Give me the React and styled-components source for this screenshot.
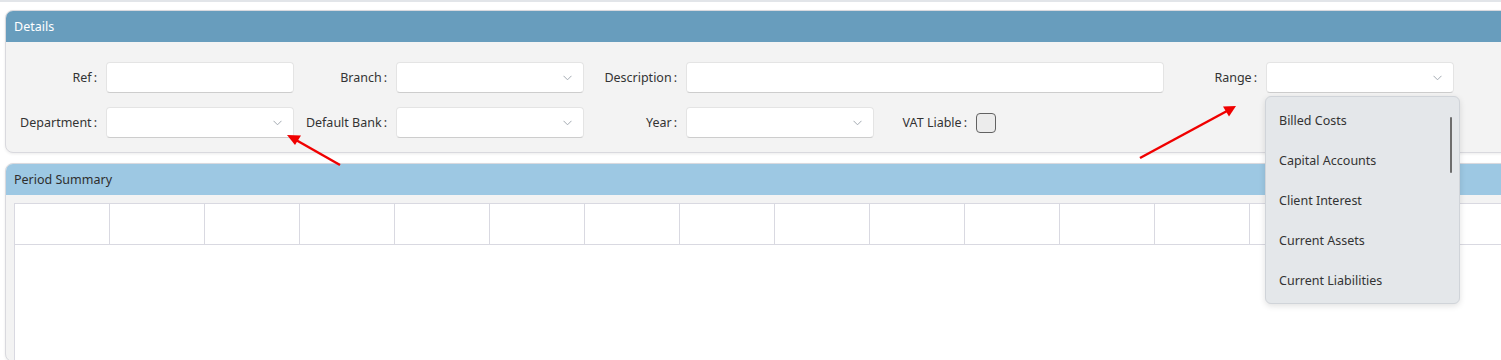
import React from "react";
import styled, { createGlobalStyle } from "styled-components";

const GlobalStyle = createGlobalStyle`
  html, body { margin: 0; padding: 0; background: #ffffff; overflow: hidden; }
  body { font-family: "Noto Sans", "Open Sans", sans-serif; color: #333; }
  * { box-sizing: border-box; }
`;

const TopLine = styled.div`
  height: 2px;
  background: #e2e5e9;
`;

const Page = styled.div`
  position: relative;
  padding: 8px 0 0 5px;
  display: flex;
  flex-direction: column;
  gap: 10px;
  width: calc(100% + 30px);
`;

const Panel = styled.section`
  background: #f3f3f3;
  border: 1px solid #d9d9de;
  border-radius: 8px;
  box-shadow: 0 1px 3px rgba(0, 0, 0, 0.08);
`;

const PanelHeader = styled.div`
  height: 31px;
  display: flex;
  align-items: center;
  padding-left: 8px;
  font-size: 12.5px;
  color: ${(p) => (p.$light ? "#2e2e2e" : "#ffffff")};
  background: ${(p) => (p.$light ? "#9dc8e3" : "#689dbd")};
  border-radius: 7px 7px 0 0;
`;

const Form = styled.div`
  display: grid;
  grid-template-columns: 100px 188px 102px 188px 102px 188px 102px 188px 102px 188px;
  grid-auto-rows: 31px;
  row-gap: 14px;
  padding: 20px 0 14px 0;
`;

const Label = styled.label`
  display: flex;
  align-items: center;
  justify-content: flex-end;
  padding-right: 9px;
  font-size: 12.5px;
  color: #333;
  white-space: nowrap;
`;

const Colon = styled.span`
  margin-left: 2px;
`;

const TextBox = styled.div`
  grid-column: ${(p) => p.$span || "auto"};
  background: #ffffff;
  border: 1px solid #e4e4e4;
  border-bottom-color: #cdcdcd;
  border-radius: 4px;
  position: relative;
  display: flex;
  align-items: center;
  justify-content: flex-end;
  padding-right: 11px;
`;

const CheckCell = styled.div`
  display: flex;
  align-items: center;
`;

const CheckBox = styled.div`
  width: 20px;
  height: 20px;
  border: 1.5px solid #626262;
  border-radius: 4px;
  background: #ececec;
`;

const Dropdown = styled.div`
  position: absolute;
  top: calc(100% + 4px);
  left: -2px;
  width: 195px;
  height: 208px;
  background: #e4e7ea;
  border: 1px solid #d0d4d9;
  border-radius: 6px;
  box-shadow: 0 2px 6px rgba(0, 0, 0, 0.12);
  padding-top: 3px;
  z-index: 5;
`;

const Option = styled.div`
  height: 40px;
  display: flex;
  align-items: center;
  padding-left: 13px;
  font-size: 12.5px;
  color: #333;
`;

const ScrollThumb = styled.div`
  position: absolute;
  top: 20px;
  right: 7px;
  width: 2px;
  height: 56px;
  border-radius: 1px;
  background: #6d6d6d;
`;

const SummaryBody = styled.div`
  padding: 8px 0 0 8px;
  height: 166px;
`;

const Grid = styled.div`
  background: #ffffff;
  border: 1px solid #d9d9e1;
  border-right: none;
  border-bottom: none;
  height: 100%;
`;

const GridHeader = styled.div`
  display: grid;
  grid-template-columns: repeat(16, 95px);
  height: 41px;
  border-bottom: 1px solid #d9d9e1;
`;

const GridCell = styled.div`
  border-right: 1px solid #d9d9e1;
`;

const Overlay = styled.svg`
  position: absolute;
  left: 0;
  top: 0;
  pointer-events: none;
  z-index: 10;
`;

const Chevron = () => (
  <svg width="9" height="6" viewBox="0 0 9 6">
    <polyline points="0.5,0.8 4.5,4.8 8.5,0.8" fill="none" stroke="#a3aab2" strokeWidth="1" />
  </svg>
);

const Select = ({ children }) => (
  <TextBox>
    <Chevron />
    {children}
  </TextBox>
);

const Field = ({ text }) => (
  <Label>
    {text}
    <Colon>:</Colon>
  </Label>
);

const options = ["Billed Costs", "Capital Accounts", "Client Interest", "Current Assets", "Current Liabilities"];

export default function App() {
  return (
    <>
      <GlobalStyle />
      <TopLine />
      <Page>
        <Panel>
          <PanelHeader>Details</PanelHeader>
          <Form>
            <Field text="Ref" />
            <TextBox />
            <Field text="Branch" />
            <Select />
            <Field text="Description" />
            <TextBox $span="span 3" />
            <Field text="Range" />
            <Select>
              <Dropdown>
                {options.map((o) => (
                  <Option key={o}>{o}</Option>
                ))}
                <ScrollThumb />
              </Dropdown>
            </Select>

            <Field text="Department" />
            <Select />
            <Field text="Default Bank" />
            <Select />
            <Field text="Year" />
            <Select />
            <Field text="VAT Liable" />
            <CheckCell>
              <CheckBox />
            </CheckCell>
          </Form>
        </Panel>
        <Panel>
          <PanelHeader $light>Period Summary</PanelHeader>
          <SummaryBody>
            <Grid>
              <GridHeader>
                {Array.from({ length: 16 }).map((_, i) => (
                  <GridCell key={i} />
                ))}
              </GridHeader>
            </Grid>
          </SummaryBody>
        </Panel>
      </Page>
      <Overlay width="1501" height="360" viewBox="0 0 1501 360">
        <line x1="340" y1="165" x2="296" y2="140" stroke="#f00000" strokeWidth="2.5" />
        <polygon points="287,135 301,135.5 295,145" fill="#f00000" />
        <line x1="1140" y1="158" x2="1227" y2="111" stroke="#f00000" strokeWidth="2.5" />
        <polygon points="1236,106 1229,116.5 1223,106.5" fill="#f00000" />
      </Overlay>
    </>
  );
}
